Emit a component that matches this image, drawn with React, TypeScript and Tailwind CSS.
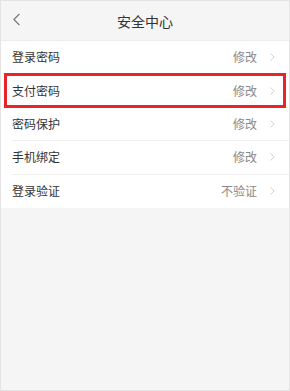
const ROWS = [
  { label: '登录密码', value: '修改' },
  { label: '支付密码', value: '修改' },
  { label: '密码保护', value: '修改' },
  { label: '手机绑定', value: '修改' },
  { label: '登录验证', value: '不验证' },
]

function Chevron({ className }: { className?: string }) {
  return (
    <svg viewBox="0 0 6 10" className={className} fill="none" stroke="currentColor" strokeWidth="1" strokeLinecap="round" strokeLinejoin="round">
      <path d="M1 1l4 4-4 4" />
    </svg>
  )
}

export default function App() {
  return (
    <div
      className="relative w-[290px] h-[391px] overflow-hidden bg-[#f5f5f5] border border-[#e4e4e4] text-[#333]"
      style={{ fontFamily: '"Noto Sans CJK SC", "Noto Sans", sans-serif' }}
    >
      {/* Header */}
      <header className="relative h-[39px] flex items-center justify-center">
        <svg viewBox="0 0 8 14" className="absolute left-[12px] top-[12px] w-[7px] h-[13px] text-[#777]" fill="none" stroke="currentColor" strokeWidth="1.3" strokeLinecap="round" strokeLinejoin="round">
          <path d="M7 1L1 7l6 6" />
        </svg>
        <h1 className="text-[14px] leading-none text-[#333]">安全中心</h1>
      </header>

      {/* List */}
      <div className="bg-white border-t border-[#ececec]">
        {ROWS.map((row, i) => (
          <div key={row.label} className="pl-[11px]">
            <div
              className={`h-[33.4px] flex items-center pr-[14px] ${
                i < ROWS.length - 1 ? 'border-b border-[#efefef]' : ''
              }`}
            >
              <span className="flex-1 text-[12px] text-[#333]">{row.label}</span>
              <span className="text-[12px] text-[#888]">{row.value}</span>
              <Chevron className="ml-[13px] w-[5px] h-[8px] text-[#c4c4c4]" />
            </div>
          </div>
        ))}
      </div>

      {/* Annotation box */}
      <div className="absolute left-[3px] top-[72px] w-[282px] h-[35px] border-[3px] border-[#e8232a]" />
    </div>
  )
}
